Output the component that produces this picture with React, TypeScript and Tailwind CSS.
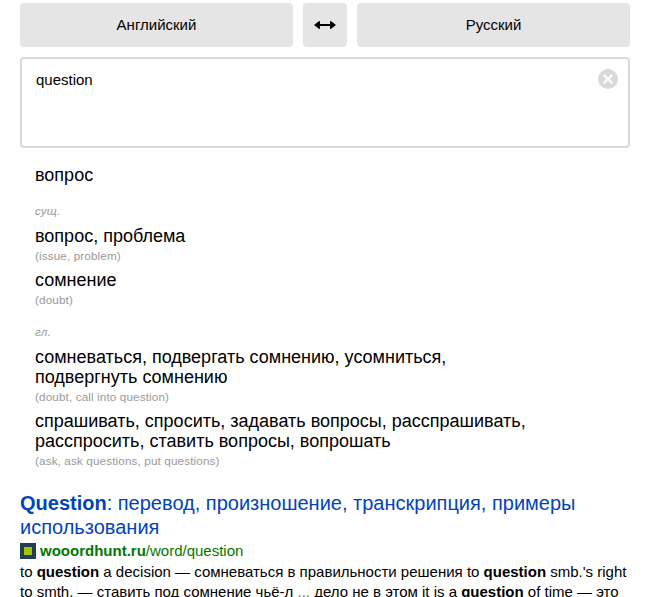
import React from 'react';

type Meaning = { words: string; hint: string };

function MeaningItem({ words, hint }: Meaning) {
  return (
    <li className="pb-1">
      <p className="w-[500px] text-lg leading-5">{words}</p>
      <p className="h-5 text-[11.7px] leading-5 tracking-[0.13px] text-[#999]">{hint}</p>
    </li>
  );
}

function PartOfSpeech({ label, meanings }: { label: string; meanings: Meaning[] }) {
  return (
    <section className="mb-[7px]">
      <h3 className="mb-1 text-[11.7px] leading-[22px] tracking-[0.13px] text-[#999] italic">{label}</h3>
      <ul>
        {meanings.map((m) => (
          <MeaningItem key={m.hint} words={m.words} hint={m.hint} />
        ))}
      </ul>
    </section>
  );
}

const nouns: Meaning[] = [
  { words: 'вопрос, проблема', hint: '(issue, problem)' },
  { words: 'сомнение', hint: '(doubt)' },
];

const verbs: Meaning[] = [
  { words: 'сомневаться, подвергать сомнению, усомниться, подвергнуть сомнению', hint: '(doubt, call into question)' },
  { words: 'спрашивать, спросить, задавать вопросы, расспрашивать, расспросить, ставить вопросы, вопрошать', hint: '(ask, ask questions, put questions)' },
];

export default function App() {
  return (
    <main className="h-[597px] w-[651px] overflow-hidden bg-white pt-[3px] pr-[21px] pl-5 font-['Liberation_Sans',Arial,sans-serif] text-black">
      <div className="flex h-11 gap-2.5 text-[15px]">
        <button className="flex-1 rounded bg-[#e5e5e5]">Английский</button>
        <button className="flex w-11 items-center justify-center rounded bg-[#e5e5e5]">
          <svg width="22" height="8" viewBox="0 0 22 8">
            <path d="M0 4 4.500 0.500 6 0v3h10V0l1.500 0.500L22 4l-4.500 3.500L16 8V5H6v3L4.500 7.500z" />
          </svg>
        </button>
        <button className="flex-1 rounded bg-[#e5e5e5]">Русский</button>
      </div>

      <div className="mt-2.5 flex h-[91px] items-start justify-between rounded border-2 border-[#d9d9d9] pt-2.5 pr-2.5 pl-3.5">
        <span className="pt-px text-[15px] leading-5">question</span>
        <svg width="20" height="20" viewBox="0 0 20 20">
          <circle cx="10" cy="10" r="10" fill="#d9d9d9" />
          <path d="m5.700 5.700 8.600 8.600m0-8.600-8.600 8.600" stroke="#fff" strokeWidth="2.200" />
        </svg>
      </div>

      <div className="pt-[17px] pl-[15px]">
        <p className="mb-[15px] text-lg leading-5">вопрос</p>
        <PartOfSpeech label="сущ." meanings={nouns} />
        <PartOfSpeech label="гл." meanings={verbs} />
      </div>

      <article className="pt-[9px]">
        <h2 className="text-xl leading-6 text-[#04b]">
          <b>Question</b>: перевод, произношение, транскрипция, примеры использования
        </h2>
        <div className="mt-0.5 flex h-5 items-center text-[15px] text-[#070]">
          <span className="mr-1 flex size-4 items-center justify-center bg-[#253d50]">
            <span className="size-2 bg-linear-to-b from-[#a8c400] to-[#94cc00]" />
          </span>
          <b>wooordhunt.ru</b>/word/question
        </div>
        <p className="mt-px text-[15px] leading-5 whitespace-nowrap">
          to <b>question</b> a decision — сомневаться в правильности решения to <b>question</b> smb.'s right
          <br />
          to smth. — ставить под сомнение чьё-л <span className="text-[#666]">...</span> дело не в этом it is a <b>question</b> of time — это
        </p>
      </article>
    </main>
  );
}
